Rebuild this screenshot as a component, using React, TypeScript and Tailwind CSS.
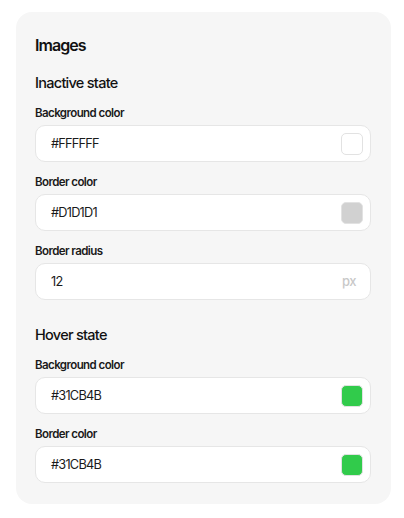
import React from 'react';

type Field = {
  label: string;
  value: string;
  swatch?: string;
  unit?: string;
};

const sections: { title: string; fields: Field[] }[] = [
  {
    title: 'Inactive state',
    fields: [
      { label: 'Background color', value: '#FFFFFF', swatch: '#FFFFFF' },
      { label: 'Border color', value: '#D1D1D1', swatch: '#D1D1D1' },
      { label: 'Border radius', value: '12', unit: 'px' },
    ],
  },
  {
    title: 'Hover state',
    fields: [
      { label: 'Background color', value: '#31CB4B', swatch: '#31CB4B' },
      { label: 'Border color', value: '#31CB4B', swatch: '#31CB4B' },
    ],
  },
];

const FieldRow: React.FC<{ field: Field }> = ({ field }) => (
  <div className="flex flex-col gap-1">
    <label className="text-[11.5px] leading-4 font-semibold tracking-[-0.05em] text-[#1a1a1a]">{field.label}</label>
    <div className="flex items-center justify-between h-[37px] bg-white border border-[#e6e6e6] rounded-[10px] pl-[15px] pr-[7px]">
      <span className="text-[12.75px] tracking-[-0.06em] text-[#1a1a1a]">{field.value}</span>
      {field.swatch && (
        <span
          className="w-[22px] h-[22px] rounded-[5px] border border-[#e2e2e2]"
          style={{ backgroundColor: field.swatch }}
        />
      )}
      {field.unit && (
        <span className="text-[13px] tracking-[-0.04em] font-medium text-[#c8c8c8] pr-[7px]">{field.unit}</span>
      )}
    </div>
  </div>
);

export default function App() {
  return (
    <div className="min-h-screen bg-white pt-3 px-4" style={{ fontFamily: 'Inter, "Noto Sans", sans-serif' }}>
      <div className="w-[375px] bg-[#f6f6f6] rounded-[16px] pt-5 pb-[21px] pl-[19px] pr-5">
        <h2 className="text-[16px] leading-[26px] font-semibold tracking-[-0.06em] text-[#111]">Images</h2>
        {sections.map((section, i) => (
          <div key={section.title} className={i === 0 ? 'mt-[14px]' : 'mt-[24px]'}>
            <h3 className="text-[14.5px] leading-[22px] font-medium tracking-[-0.05em] text-[#111]">{section.title}</h3>
            <div className="mt-[11px] flex flex-col gap-3">
              {section.fields.map((f) => (
                <FieldRow key={f.label} field={f} />
              ))}
            </div>
          </div>
        ))}
      </div>
    </div>
  );
}
